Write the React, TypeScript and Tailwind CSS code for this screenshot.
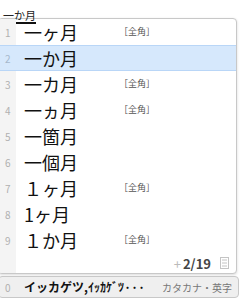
import React from "react";

const rows: { n: number; t: string; tag?: boolean; sel?: boolean }[] = [
  { n: 1, t: "一ヶ月", tag: true },
  { n: 2, t: "一か月", sel: true },
  { n: 3, t: "一カ月", tag: true },
  { n: 4, t: "一ヵ月", tag: true },
  { n: 5, t: "一箇月" },
  { n: 6, t: "一個月" },
  { n: 7, t: "１ヶ月", tag: true },
  { n: 8, t: "1ヶ月" },
  { n: 9, t: "１か月", tag: true },
];

export default function App() {
  return (
    <div
      className="w-[243px] h-[300px] bg-white relative overflow-hidden"
      style={{ fontFamily: '"Noto Sans CJK JP", "Noto Sans", sans-serif' }}
    >
      <div className="h-[18px] pl-[3px] pt-[1px]">
        <span className="inline-block text-[11px] leading-[14px] text-[#222] border-b-2 border-[#111]">
          一か月
        </span>
      </div>
      <div className="w-[239px] -ml-[2px] border border-[#c8c8c8] rounded-[4px] shadow-[0_1px_3px_rgba(0,0,0,0.15)] bg-white overflow-hidden">
        {rows.map((r) => (
          <div
            key={r.n}
            className={`flex h-[26px] items-center ${
              r.sel ? "bg-[#d6e8fc] border-y border-[#b9d6f7]" : ""
            }`}
          >
            <div
              className={`w-[17px] h-full flex items-center pl-[6px] text-[10px] ${
                r.sel ? "text-[#a6b8cc]" : "bg-[#f4f4f4] text-[#b0b0b0]"
              }`}
            >
              {r.n}
            </div>
            <div className="w-[103px] pl-[8px] text-[18px] leading-none text-[#111] whitespace-nowrap">
              {r.t}
            </div>
            {r.tag && (
              <div className="text-[9px] text-[#555] whitespace-nowrap">［全角］</div>
            )}
          </div>
        ))}
        <div className="flex h-[20px] items-center">
          <div className="w-[17px] h-full bg-[#f4f4f4]" />
          <div className="flex-1 flex items-center justify-end pr-[7px] gap-[9px]">
            <div className="flex items-center text-[13px] leading-none">
              <span className="text-[#bbb] mr-[2px]">+</span>
              <span className="font-bold text-[#444]">2/19</span>
            </div>
            <svg width="9" height="12" viewBox="0 0 9 12">
              <rect x="0.5" y="0.5" width="8" height="11" fill="none" stroke="#c4c4c4" />
              <line x1="2" y1="3" x2="7" y2="3" stroke="#c4c4c4" />
              <line x1="2" y1="6" x2="7" y2="6" stroke="#c4c4c4" />
              <line x1="2" y1="9" x2="7" y2="9" stroke="#c4c4c4" />
            </svg>
          </div>
        </div>
      </div>
      <div className="mt-[2px] w-[241px] -ml-[2px] h-[22px] flex items-center border border-[#c8c8c8] rounded-[4px] bg-[#efefef]">
        <div className="w-[17px] pl-[6px] text-[10px] text-[#b0b0b0]">0</div>
        <div className="pl-[8px] text-[12px] font-bold text-[#111] whitespace-nowrap">
          イッカゲツ,ｲｯｶｹﾞﾂ···
        </div>
        <div className="ml-auto pr-[6px] text-[10px] text-[#777] whitespace-nowrap">
          カタカナ・英字
        </div>
      </div>
    </div>
  );
}
